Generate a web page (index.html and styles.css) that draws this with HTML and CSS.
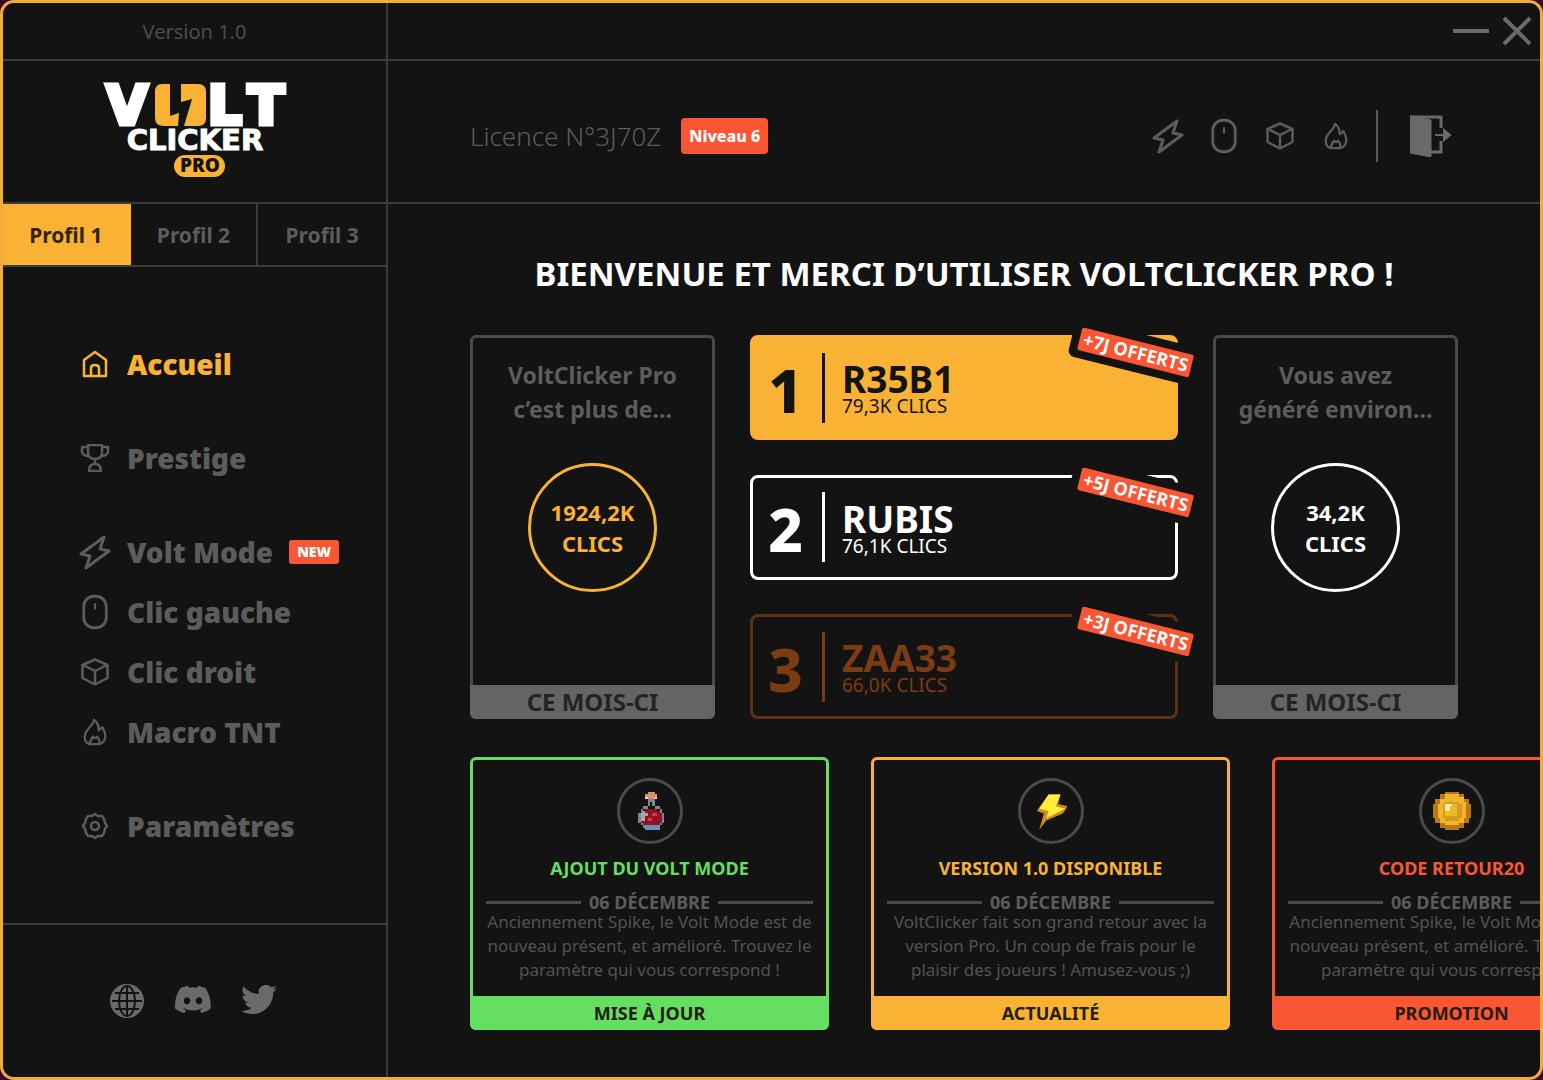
FILE: index.html
```
<!DOCTYPE html>
<html lang="fr">
<head>
  <meta charset="utf-8">
  <title>VoltClicker Pro</title>
  <link rel="stylesheet" href="styles.css">
</head>
<body>
  <!-- icones reutilisees dans le menu et l'en-tete -->
  <svg class="sprite" aria-hidden="true">
    <symbol id="i-bolt" viewBox="0 0 32 36">
      <path d="M25 3 L2 20 L11 22 L7 34 L30 17 L21 15 Z" stroke-width="3"/>
    </symbol>
    <symbol id="i-mouse" viewBox="0 0 24 32">
      <rect x="2" y="2" width="20" height="28" rx="9" stroke-width="2.5"/>
      <path d="M12 9 V13" stroke-width="2"/>
    </symbol>
    <symbol id="i-cube" viewBox="0 0 28 28">
      <path d="M14 1.500 L26.500 7 V20 L14 26.500 L1.500 20 V7 Z M2 7 L14 13 L26 7 M14 13 V26" stroke-width="2.5"/>
    </symbol>
    <symbol id="i-fire" viewBox="0 0 26 30">
      <path d="M12 2 C12 8 2 12 2 20 C2 24 4 27 7 28 C8 25 9 22 11 20 C12 22 14 22 15 20 C18 22 18 26 17 28 C22 27 24 23 24 19 C24 15 22 12 21 10 L17 13 C17 8 15 4 12 2 Z M7 28 H17" stroke-width="2.5"/>
    </symbol>
  </svg>

  <div class="fenetre">
    <aside class="cote">
      <p class="version">Version 1.0</p>

      <div class="marque">
        <svg class="logo" viewBox="0 0 196 96" role="img" aria-label="VoltClicker Pro">
          <text class="logo-volt" x="30" y="42" text-anchor="middle">V</text>
          <path fill="#f9b234" d="M65 2 H73 V34 L82 31 L81 44 H67 Q58 44 58 36 V10 Q58 2 65 2 Z"/>
          <path fill="#f9b234" d="M84 2 H101 Q109 2 109 10 V36 Q109 44 101 44 H87 L95 17 L84 20 Z"/>
          <text class="logo-volt" x="111" y="42">L</text>
          <text class="logo-volt" x="169" y="42" text-anchor="middle">T</text>
          <text class="logo-clicker" x="98" y="68" text-anchor="middle">CLICKER</text>
          <rect x="77" y="73" width="51" height="22" rx="11" fill="#f9b234"/>
          <text class="logo-pro" x="103" y="90" text-anchor="middle">PRO</text>
        </svg>
      </div>

      <div class="profils">
        <button type="button" class="profil actif">Profil 1</button>
        <button type="button" class="profil">Profil 2</button>
        <button type="button" class="profil">Profil 3</button>
      </div>

      <nav class="menu">
        <a href="#accueil" class="lien actif">
          <svg class="icone" viewBox="0 0 28 28"><path d="M3 10 L14 2 L25 10 V26 H3 Z M10 26 V18 Q10 15 14 15 Q18 15 18 18 V26" stroke-width="2.5"/></svg>
          Accueil
        </a>
        <a href="#prestige" class="lien espace-haut">
          <svg class="icone" viewBox="0 0 28 28"><path d="M7 1 H21 V8 Q21 15 14 15 Q7 15 7 8 Z M7 3 H1 V8 Q2 12 8 12 M21 3 H27 V8 Q26 12 20 12 M14 15 V20 M8 27 Q8 20 14 20 Q20 20 20 27 Z" stroke-width="2.5"/></svg>
          Prestige
        </a>
        <a href="#volt" class="lien espace-haut">
          <svg class="icone grande"><use href="#i-bolt"/></svg>
          Volt Mode
          <span class="nouveau">NEW</span>
        </a>
        <a href="#gauche" class="lien">
          <svg class="icone grande"><use href="#i-mouse"/></svg>
          Clic gauche
        </a>
        <a href="#droit" class="lien">
          <svg class="icone"><use href="#i-cube"/></svg>
          Clic droit
        </a>
        <a href="#macro" class="lien">
          <svg class="icone"><use href="#i-fire"/></svg>
          Macro TNT
        </a>
        <a href="#parametres" class="lien espace-haut">
          <svg class="icone" viewBox="0 0 28 28"><path d="M11 4 L14 2 L17 4 L21 4 L23 7 L24 11 L26 14 L24 17 L23 21 L21 24 L17 24 L14 26 L11 24 L7 24 L5 21 L4 17 L2 14 L4 11 L5 7 L7 4 Z" stroke-width="2.5"/><circle cx="14" cy="14" r="4" stroke-width="2.5"/></svg>
          Paramètres
        </a>
      </nav>

      <div class="reseaux">
        <a href="#site" aria-label="Site web">
          <svg viewBox="0 0 36 36"><circle cx="18" cy="18" r="17" fill="#6a6a6a"/><g fill="none" stroke="#131313" stroke-width="2"><ellipse cx="18" cy="18" rx="8" ry="15"/><path d="M18 3 V33 M3 18 H33 M6 10 H30 M6 26 H30"/></g></svg>
        </a>
        <a href="#discord" aria-label="Discord">
          <svg viewBox="0 0 24 24"><path fill="#6a6a6a" d="M20.3 3.4A19.8 19.8 0 0 0 15.4 1.9c-.2.4-.4.9-.6 1.2a18.3 18.3 0 0 0-5.5 0c-.2-.4-.4-.8-.6-1.2A19.7 19.7 0 0 0 3.700 3.400C.5 8-.3 12.600.1 17.100a19.900 19.900 0 0 0 6 3c.5-.6.9-1.300 1.200-2a13 13 0 0 1-1.900-.9l.4-.3a14.200 14.200 0 0 0 12.200 0l.4.3c-.6.4-1.200.7-1.900.9.400.7.800 1.400 1.200 2a19.800 19.800 0 0 0 6-3c.5-5.200-.8-9.700-3.400-13.700zM8 14.300c-1.200 0-2.200-1.100-2.200-2.400S6.800 9.500 8 9.500s2.200 1.100 2.200 2.400-1 2.400-2.200 2.400zm8 0c-1.200 0-2.200-1.100-2.200-2.400s1-2.400 2.200-2.400 2.200 1.100 2.200 2.400-1 2.400-2.200 2.400z"/></svg>
        </a>
        <a href="#twitter" aria-label="Twitter">
          <svg viewBox="0 0 24 24"><path fill="#6a6a6a" d="M24 3.600a10 10 0 0 1-2.800.8 5 5 0 0 0 2.200-2.700c-1 .6-2 1-3.100 1.200a4.900 4.900 0 0 0-8.400 4.500C7.700 7.100 4.100 5.100 1.700 2.100a4.900 4.900 0 0 0 1.500 6.600c-.8 0-1.600-.2-2.200-.6v.1a4.900 4.900 0 0 0 3.900 4.800 5 5 0 0 1-2.200.1 4.900 4.900 0 0 0 4.600 3.400A9.900 9.900 0 0 1 0 18.500a14 14 0 0 0 7.500 2.200c9.100 0 14-7.500 14-14v-.6A10 10 0 0 0 24 3.600z"/></svg>
        </a>
      </div>
    </aside>

    <main class="principal">
      <div class="barre">
        <button type="button" class="controle" aria-label="Réduire">
          <svg viewBox="0 0 38 30"><path d="M1 15 H37" stroke-width="4"/></svg>
        </button>
        <button type="button" class="controle" aria-label="Fermer">
          <svg viewBox="0 0 30 30"><path d="M2 2 L28 28 M28 2 L2 28" stroke-width="4"/></svg>
        </button>
      </div>

      <header class="entete">
        <span class="licence">Licence N°3J70Z</span>
        <span class="niveau">Niveau 6</span>
        <div class="raccourcis">
          <button type="button" aria-label="Volt Mode"><svg class="icone grande"><use href="#i-bolt"/></svg></button>
          <button type="button" aria-label="Clic gauche"><svg class="icone grande"><use href="#i-mouse"/></svg></button>
          <button type="button" aria-label="Clic droit"><svg class="icone"><use href="#i-cube"/></svg></button>
          <button type="button" aria-label="Macro TNT"><svg class="icone"><use href="#i-fire"/></svg></button>
          <span class="trait"></span>
          <button type="button" class="sortie" aria-label="Déconnexion">
            <svg viewBox="0 0 42 42"><path fill="#6a6a6a" d="M0 1 L21 5 V42 L0 38 Z"/><path d="M0 2 H31 V13 M31 26 V37 H21" stroke-width="3"/><path fill="#6a6a6a" d="M25 20 H36 M34 15 L40 20 L34 25 Z" stroke-width="2"/></svg>
          </button>
        </div>
      </header>

      <section class="contenu">
        <h1>BIENVENUE ET MERCI D’UTILISER VOLTCLICKER PRO !</h1>

        <div class="stats">
          <article class="total">
            <p class="total-texte">VoltClicker Pro<br>c’est plus de...</p>
            <p class="cercle jaune">1924,2K<br>CLICS</p>
            <p class="total-pied">CE MOIS-CI</p>
          </article>

          <ol class="podium">
            <li class="rang premier">
              <span class="numero">1</span>
              <div class="joueur"><strong>R35B1</strong><span>79,3K CLICS</span></div>
              <span class="offre">+7J OFFERTS</span>
            </li>
            <li class="rang deuxieme">
              <span class="numero">2</span>
              <div class="joueur"><strong>RUBIS</strong><span>76,1K CLICS</span></div>
              <span class="offre">+5J OFFERTS</span>
            </li>
            <li class="rang troisieme">
              <span class="numero">3</span>
              <div class="joueur"><strong>ZAA33</strong><span>66,0K CLICS</span></div>
              <span class="offre">+3J OFFERTS</span>
            </li>
          </ol>

          <article class="total">
            <p class="total-texte">Vous avez<br>généré environ...</p>
            <p class="cercle blanc">34,2K<br>CLICS</p>
            <p class="total-pied">CE MOIS-CI</p>
          </article>
        </div>

        <div class="actus">
          <article class="actu vert">
            <span class="rond">
              <svg viewBox="0 0 16 16" shape-rendering="crispEdges">
                <path fill="#d9906c" d="M7 0h3v1h-3z M6 1h5v2h-5z"/>
                <path fill="#f3d3bd" d="M6 2h1v1h-1z M10 2h1v1h-1z"/>
                <path fill="#7b8793" d="M7 3h3v1h-3z M7 4h1v2h-1z M9 4h1v2h-1z M5 6h2v1h-2z M10 6h2v1h-2z M4 7h1v2h-1z M12 7h1v2h-1z M3 9h1v4h-1z M13 9h1v4h-1z M4 13h1v1h-1z M12 13h1v1h-1z"/>
                <path fill="#6c8fb8" d="M5 14h7v1h-7z M6 15h6v1h-6z"/>
                <path fill="#8e1520" d="M6 7h5v1h-5z M5 8h7v1h-7z M4 9h9v4h-9z M5 13h7v1h-7z"/>
                <path fill="#b8a3a8" d="M5 8h1v1h-1z M4 9h2v3h-2z M6 9h1v1h-1z"/>
                <path fill="#d03a45" d="M9 9h2v1h-2z M7 11h2v1h-2z"/>
              </svg>
            </span>
            <h2>AJOUT DU VOLT MODE</h2>
            <p class="date">06 DÉCEMBRE</p>
            <p class="resume">Anciennement Spike, le Volt Mode est de nouveau présent, et amélioré. Trouvez le paramètre qui vous correspond !</p>
            <p class="actu-pied">MISE À JOUR</p>
          </article>

          <article class="actu jaune">
            <span class="rond">
              <svg viewBox="0 0 16 16">
                <path fill="#d08a1c" d="M7 1 H12 L11 5 L15 6 L13 9 L6 12 L3 16 L5 9 L2 8 Z"/>
                <path fill="#ffee3a" d="M7 1 H12 L10 6 L14 7 L6 11 L7 8 L3 7 Z"/>
              </svg>
            </span>
            <h2>VERSION 1.0 DISPONIBLE</h2>
            <p class="date">06 DÉCEMBRE</p>
            <p class="resume">VoltClicker fait son grand retour avec la version Pro. Un coup de frais pour le plaisir des joueurs ! Amusez-vous ;)</p>
            <p class="actu-pied">ACTUALITÉ</p>
          </article>

          <article class="actu rouge">
            <span class="rond">
              <svg viewBox="0 0 16 16" shape-rendering="crispEdges">
                <path fill="#b87a10" d="M5 0h6v1h2v2h2v2h1v6h-1v2h-2v2h-2v1h-6v-1h-2v-2h-2v-2h-1v-6h1v-2h2v-2h2z"/>
                <path fill="#efb52f" d="M5 1h6v1h2v2h1v7h-1v2h-2v1h-6v-1h-2v-2h-1v-6h1v-2h2z"/>
                <path fill="#d99a1c" d="M5 4h6v1h1v6h-1v1h-6v-1h-1v-6h1z"/>
                <path fill="#f0b62c" d="M5 5h5v5h-5z"/>
                <path fill="#fff2a8" d="M5 5h3v1h-1v2h-2z"/>
              </svg>
            </span>
            <h2>CODE RETOUR20</h2>
            <p class="date">06 DÉCEMBRE</p>
            <p class="resume">Anciennement Spike, le Volt Mode est de nouveau présent, et amélioré. Trouvez le paramètre qui vous correspond !</p>
            <p class="actu-pied">PROMOTION</p>
          </article>
        </div>
      </section>
    </main>
  </div>
</body>
</html>
```
FILE: styles.css
```
* {
  box-sizing: border-box;
}

body {
  margin: 0;
  background: #3a0a2c;
  font-family: "Noto Sans", "Open Sans", sans-serif;
  color: #5c5c5c;
}

h1, h2, p, ol {
  margin: 0;
  padding: 0;
}

button {
  border: none;
  padding: 0;
  background: none;
  font-family: inherit;
  color: inherit;
  cursor: pointer;
}

a {
  color: inherit;
  text-decoration: none;
}

svg {
  display: block;
}

.sprite {
  position: absolute;
  width: 0;
  height: 0;
}

.fenetre {
  display: grid;
  grid-template-columns: 385px minmax(0, 1fr);
  min-height: 100vh;
  border: 3px solid #f2ab3c;
  border-radius: 14px;
  background: #131313;
  overflow: hidden;
}

/* colonne de gauche */
.cote {
  display: flex;
  flex-direction: column;
  border-right: 2px solid #3c3c3c;
}

.version {
  height: 58px;
  line-height: 58px;
  border-bottom: 2px solid #3c3c3c;
  text-align: center;
  font-size: 20px;
  color: #4c4c4c;
}

.marque {
  display: flex;
  justify-content: center;
  height: 143px;
  padding-top: 21px;
  border-bottom: 2px solid #3c3c3c;
}

.logo {
  width: 196px;
  height: 96px;
  overflow: visible;
}

.logo-volt,
.logo-clicker {
  font-family: "DejaVu Sans", sans-serif;
  font-weight: bold;
  fill: #ffffff;
  stroke: #ffffff;
}

.logo-volt {
  font-size: 53px;
  stroke-width: 5px;
}

.logo-clicker {
  font-size: 29px;
  stroke-width: 1px;
}

.logo-pro {
  font-size: 19px;
  font-weight: 900;
  fill: #131313;
}

.profils {
  display: grid;
  grid-template-columns: repeat(3, 1fr);
  height: 63px;
  border-bottom: 2px solid #3c3c3c;
}

.profil {
  border-right: 2px solid #3c3c3c;
  font-size: 21px;
  font-weight: bold;
}

.profil:last-child {
  border-right: none;
}

.profil.actif {
  background: #f9b234;
  border-color: #f9b234;
  color: #33250d;
}

.menu {
  flex: 1;
  padding: 67px 0 0 76px;
}

.lien {
  display: flex;
  align-items: center;
  gap: 16px;
  height: 60px;
  font-size: 28px;
  font-weight: 900;
}

.lien.actif {
  color: #f9b234;
}

.espace-haut {
  margin-top: 34px;
}

.icone {
  width: 32px;
  height: 28px;
  fill: none;
  stroke: currentColor;
  stroke-linejoin: round;
  stroke-linecap: round;
}

.icone.grande {
  height: 36px;
}

.nouveau {
  padding: 0 8px;
  border-radius: 3px;
  background: #fb5633;
  color: #ffffff;
  font-size: 14px;
  line-height: 24px;
}

.reseaux {
  display: flex;
  justify-content: center;
  align-items: center;
  gap: 30px;
  height: 154px;
  padding-right: 4px;
  border-top: 2px solid #3c3c3c;
}

.reseaux svg {
  width: 36px;
  height: 36px;
}

/* partie droite */
.principal {
  min-width: 0;
}

.barre {
  display: flex;
  justify-content: flex-end;
  align-items: center;
  gap: 12px;
  height: 58px;
  padding-right: 8px;
  border-bottom: 2px solid #3c3c3c;
}

.controle svg {
  height: 30px;
  fill: none;
  stroke: #6a6a6a;
}

.entete {
  display: flex;
  align-items: center;
  height: 143px;
  padding: 8px 88px 0 82px;
  border-bottom: 2px solid #3c3c3c;
}

.licence {
  font-size: 26px;
  font-weight: 300;
}

.niveau {
  margin-left: 20px;
  padding: 0 8px;
  border-radius: 4px;
  background: #fb5633;
  color: #ffffff;
  font-size: 16px;
  font-weight: 800;
  line-height: 36px;
}

.raccourcis {
  display: flex;
  align-items: center;
  gap: 24px;
  margin-left: auto;
}

.trait {
  width: 2px;
  height: 52px;
  margin-right: 8px;
  background: #5c5c5c;
}

.sortie svg {
  width: 42px;
  height: 42px;
  fill: none;
  stroke: #6a6a6a;
}

.contenu {
  padding: 48px 82px 47px;
}

h1 {
  text-align: center;
  font-size: 33px;
  line-height: 44px;
  color: #ffffff;
}

.stats {
  display: grid;
  grid-template-columns: 245px minmax(0, 1fr) 245px;
  gap: 35px;
  height: 384px;
  margin-top: 39px;
}

.total {
  display: flex;
  flex-direction: column;
  align-items: center;
  border: 3px solid #4a4a4a;
  border-radius: 6px;
}

.total-texte {
  padding-top: 20px;
  text-align: center;
  font-size: 23px;
  font-weight: bold;
  line-height: 34px;
}

.cercle {
  display: flex;
  align-items: center;
  justify-content: center;
  width: 129px;
  height: 129px;
  margin-top: 37px;
  border: 3px solid;
  border-radius: 50%;
  text-align: center;
  font-size: 22px;
  font-weight: bold;
  line-height: 31px;
}

.cercle.jaune {
  color: #f9b234;
}

.cercle.blanc {
  color: #ffffff;
}

/* le pied recouvre la bordure de la carte */
.total-pied {
  align-self: stretch;
  margin: auto -3px -3px;
  border-radius: 0 0 6px 6px;
  background: #646464;
  color: #232323;
  text-align: center;
  font-size: 24px;
  font-weight: bold;
  line-height: 34px;
}

.podium {
  display: flex;
  flex-direction: column;
  justify-content: space-between;
  list-style: none;
}

.rang {
  position: relative;
  display: flex;
  align-items: center;
  height: 105px;
  border: 3px solid;
  border-radius: 8px;
}

.premier {
  border-color: #f9b234;
  background: #f9b234;
  color: #131313;
}

.deuxieme {
  color: #ffffff;
}

.troisieme {
  border-color: #5f3014;
  color: #7c3b12;
}

.numero {
  width: 72px;
  height: 70px;
  padding-right: 4px;
  border-right: 3px solid;
  text-align: center;
  font-size: 60px;
  font-weight: 800;
  line-height: 74px;
}

.joueur {
  display: flex;
  flex-direction: column;
  padding: 3px 0 0 17px;
}

.joueur strong {
  font-size: 37px;
  line-height: 34px;
}

.joueur span {
  font-size: 19px;
  line-height: 20px;
}

.offre {
  position: absolute;
  top: 3px;
  right: -18px;
  padding: 0 4px;
  border-radius: 2px;
  background: #fb5633;
  box-shadow: 0 0 0 8px #131313;
  color: #ffffff;
  font-size: 18px;
  font-weight: bold;
  line-height: 23px;
  transform: rotate(14deg);
}

.actus {
  display: grid;
  grid-template-columns: repeat(3, 359px);
  gap: 42px;
  margin-top: 38px;
}

.actu {
  display: flex;
  flex-direction: column;
  align-items: center;
  height: 273px;
  border: 3px solid;
  border-radius: 6px;
}

.actu.vert {
  border-color: #65de62;
}

.actu.jaune {
  border-color: #f9b234;
}

.actu.rouge {
  border-color: #fb5633;
}

.rond {
  display: flex;
  align-items: center;
  justify-content: center;
  width: 66px;
  height: 66px;
  margin-top: 18px;
  border: 3px solid #4a4a4a;
  border-radius: 50%;
}

.rond svg {
  width: 38px;
  height: 38px;
}

.actu h2 {
  margin-top: 10px;
  font-size: 18px;
  line-height: 28px;
}

.vert h2 {
  color: #65de62;
}

.jaune h2 {
  color: #f9b234;
}

.rouge h2 {
  color: #fb5633;
}

.date {
  display: flex;
  align-items: center;
  align-self: stretch;
  gap: 8px;
  margin-top: 12px;
  padding: 0 13px;
  font-size: 18px;
  font-weight: bold;
  line-height: 16px;
}

.date::before,
.date::after {
  content: "";
  flex: 1;
  height: 3px;
  background: #4a4a4a;
}

.resume {
  padding: 0 10px;
  color: #525252;
  text-align: center;
  font-size: 17px;
  line-height: 24px;
}

/* meme principe que .total-pied */
.actu-pied {
  align-self: stretch;
  margin: auto -3px -3px;
  border-radius: 0 0 6px 6px;
  color: #232013;
  text-align: center;
  font-size: 18px;
  font-weight: bold;
  line-height: 34px;
}

.vert .actu-pied {
  background: #65de62;
}

.jaune .actu-pied {
  background: #f9b234;
}

.rouge .actu-pied {
  background: #fb5633;
}
```
